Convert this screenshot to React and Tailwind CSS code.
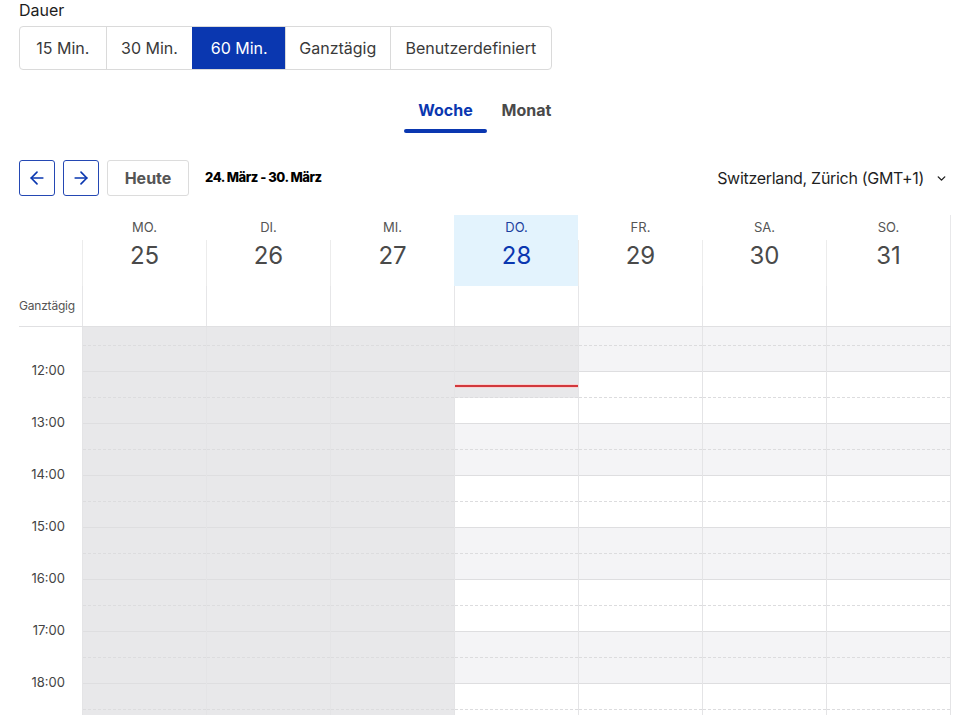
import React from "react";
import { ArrowLeft, ArrowRight, ChevronDown } from "lucide-react";

const days = [
  { n: "MO.", d: "25", past: true },
  { n: "DI.", d: "26", past: true },
  { n: "MI.", d: "27", past: true },
  { n: "DO.", d: "28", today: true },
  { n: "FR.", d: "29" },
  { n: "SA.", d: "30" },
  { n: "SO.", d: "31" },
];

const hours = [11, 12, 13, 14, 15, 16, 17, 18, 19];
const labels = [12, 13, 14, 15, 16, 17, 18];

function halfBg(day, hour, half) {
  if (day.past) return "bg-[#e8e8ea]";
  if (day.today) {
    if (hour < 12 || (hour === 12 && half === 0)) return "bg-[#e8e8ea]";
  }
  return hour % 2 === 1 ? "bg-[#f4f4f6]" : "bg-white";
}

function DayColumn({ day, last }) {
  return (
    <div className={`flex-1 flex flex-col border-l border-[#e4e4e6] ${last ? "border-r" : ""}`}>
      {hours.map((h) => (
        <div key={h} className="flex flex-col">
          <div className={`h-[26px] border-b border-dashed border-[#dcdcde] ${halfBg(day, h, 0)}`} />
          <div className={`h-[26px] border-b border-[#dedee0] ${halfBg(day, h, 1)}`} />
        </div>
      ))}
    </div>
  );
}

function TodayColumn({ day }) {
  return (
    <div className="flex-1 flex flex-col border-l border-[#e4e4e6]">
      {hours.map((h) => (
        <div key={h} className="flex flex-col">
          <div className={`h-[26px] border-b border-dashed border-[#dcdcde] ${halfBg(day, h, 0)}`}>
            {h === 12 && (
              <div className="mt-[12px] h-[4px] bg-[#f7d3d3] flex items-center">
                <div className="h-[2px] w-full bg-[#d2383c]" />
              </div>
            )}
          </div>
          <div className={`h-[26px] border-b border-[#dedee0] ${halfBg(day, h, 1)}`} />
        </div>
      ))}
    </div>
  );
}

export default function App() {
  const segs = [
    { t: "15 Min.", w: "w-[86px]" },
    { t: "30 Min.", w: "w-[87px]" },
    { t: "60 Min.", w: "w-[93px]", active: true },
    { t: "Ganztägig", w: "w-[105px]" },
    { t: "Benutzerdefiniert", w: "w-[162px]" },
  ];
  return (
    <div
      className="w-[975px] h-[715px] overflow-hidden bg-white pl-[19px] pr-[24px] text-[#222]"
      style={{ fontFamily: "Inter, 'Noto Sans', sans-serif" }}
    >
      <div className="h-[20px] leading-[20px] text-[16px] text-[#1d1d1d]">Dauer</div>
      <div className="mt-[6px] flex h-[44px] w-[533px] rounded-[4px] border border-[#dadada] overflow-hidden">
        {segs.map((s, i) => (
          <div
            key={s.t}
            className={`${s.w} flex items-center justify-center text-[16px] ${
              i > 0 ? "border-l border-[#dadada]" : ""
            } ${s.active ? "bg-[#0a37b0] text-white border-l-[#0a37b0]" : "text-[#3a3a3a]"}`}
          >
            {s.t}
          </div>
        ))}
      </div>

      <div className="mt-[22px] flex justify-center">
        <div className="flex flex-col w-[83px] items-center">
          <div className="mt-[8px] h-[20px] leading-[20px] text-[16px] font-bold text-[#0a37b0]">Woche</div>
          <div className="mt-[9px] h-[4px] w-full rounded-full bg-[#0a37b0]" />
        </div>
        <div className="flex flex-col w-[79px] items-center">
          <div className="mt-[8px] h-[20px] leading-[20px] text-[16px] font-bold text-[#4a4a4a]">Monat</div>
        </div>
      </div>

      <div className="mt-[27px] flex items-center h-[36px]">
        <div className="w-[36px] h-[36px] rounded-[3px] border border-[#2448b3] flex items-center justify-center text-[#0a37b0]">
          <ArrowLeft size={20} strokeWidth={2} />
        </div>
        <div className="ml-[8px] w-[36px] h-[36px] rounded-[3px] border border-[#2448b3] flex items-center justify-center text-[#0a37b0]">
          <ArrowRight size={20} strokeWidth={2} />
        </div>
        <div className="ml-[8px] w-[82px] h-[36px] rounded-[3px] border border-[#dcdcdc] flex items-center justify-center text-[16px] font-bold text-[#555]">
          Heute
        </div>
        <div className="ml-[16px] text-[13px] font-extrabold text-black tracking-[-0.45px]">24. März - 30. März</div>
        <div className="ml-auto flex items-center text-[16px] text-[#1f1f1f] tracking-[-0.3px]">
          <span>Switzerland, Zürich (GMT+1)</span>
          <ChevronDown size={13} strokeWidth={2.6} className="ml-[11px] mr-[3px]" />
        </div>
      </div>

      <div className="mt-[19px] flex">
        <div className="w-[63px] flex flex-col">
          <div className="h-[71px]" />
          <div className="h-[40px] flex items-center text-[12px] text-[#555] tracking-[-0.2px]">Ganztägig</div>
        </div>
        {days.map((d, i) => (
          <div key={d.d} className={`flex-1 flex flex-col ${i === 6 ? "border-r border-[#e8e8ea]" : ""}`}>
            <div
              className={`h-[25px] flex items-center justify-center text-[13px] border-l border-transparent ${
                d.today ? "bg-[#e3f3fd] text-[#1c3f9e]" : "text-[#555]"
              }`}
            >
              {d.n}
            </div>
            <div
              className={`h-[46px] border-l flex justify-center ${
                d.today ? "bg-[#e3f3fd] text-[#0a37b0] border-[#e3f3fd]" : "text-[#4a4a4a] border-[#ececec]"
              }`}
            >
              <span className="mt-[4px] leading-[24px] text-[24px]">{d.d}</span>
            </div>
            <div className="h-[40px] border-l border-[#e6e6e8]" />
          </div>
        ))}
      </div>
      <div className="h-px bg-[#e0e0e2]" />

      <div className="flex h-[388px] overflow-hidden">
        <div className="w-[63px] flex flex-col">
          <div className="h-[18px] shrink-0" />
          {labels.map((h) => (
            <div key={h} className="h-[52px] shrink-0 flex items-center justify-end pr-[17px] text-[13px] text-[#444]">
              {h}:00
            </div>
          ))}
        </div>
        <div className="flex-1 flex mt-[-7px]">
          {days.map((d, i) =>
            d.today ? <TodayColumn key={d.d} day={d} /> : <DayColumn key={d.d} day={d} last={i === 6} />
          )}
        </div>
      </div>
    </div>
  );
}
